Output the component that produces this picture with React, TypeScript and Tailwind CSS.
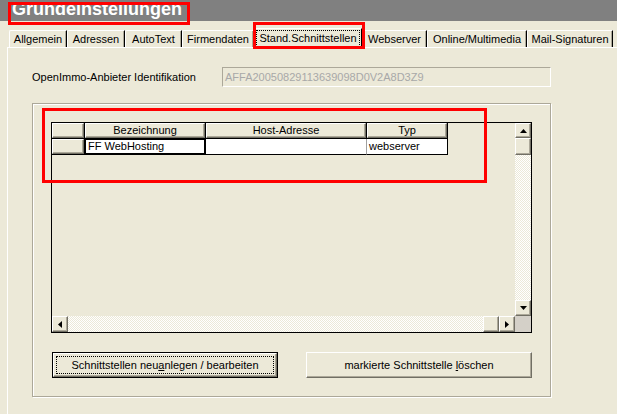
import React from "react"

const raised =
  "bg-[#ECE9D8] border border-t-white border-l-white border-r-[#716F64] border-b-[#716F64] shadow-[inset_-1px_-1px_0_#ACA899]"
const hatch =
  "bg-[image:repeating-conic-gradient(#ffffff_0_25%,#ECE9D8_0_50%)] [background-size:2px_2px]"

const tabs = [
  { label: "Allgemein", w: "w-[58px]" },
  { label: "Adressen", w: "w-[58px]" },
  { label: "AutoText", w: "w-[57px]" },
  { label: "Firmendaten", w: "w-[72px]" },
  { label: "Stand.Schnittstellen", w: "w-[108px]", active: true },
  { label: "Webserver", w: "w-[65px]" },
  { label: "Online/Multimedia", w: "w-[100px]" },
  { label: "Mail-Signaturen", w: "w-[86px]" },
]

function Arrow({ dir }: { dir: "up" | "down" | "left" | "right" }) {
  const pts = {
    up: "3.5,0 7,4 0,4",
    down: "0,0 7,0 3.5,4",
    left: "4,0 4,7 0,3.5",
    right: "0,0 4,3.5 0,7",
  }[dir]
  const horiz = dir === "up" || dir === "down"
  return (
    <svg width={horiz ? 7 : 4} height={horiz ? 4 : 7} viewBox={horiz ? "0 0 7 4" : "0 0 4 7"}>
      <polygon points={pts} fill="black" />
    </svg>
  )
}

function ScrollBtn({ dir, className = "" }: { dir?: "up" | "down" | "left" | "right"; className?: string }) {
  return (
    <div className={`${raised} flex items-center justify-center shrink-0 ${className}`}>
      {dir && <Arrow dir={dir} />}
    </div>
  )
}

export default function App() {
  return (
    <div className="w-[617px] h-[414px] bg-[#ECE9D8] overflow-hidden relative flex flex-col font-['Liberation_Sans',Arial,sans-serif] text-[11px] text-black">
      {/* title bar */}
      <div className="h-[21px] bg-[#808080] pl-[12px] text-white font-bold text-[18px] leading-[18px] shrink-0">
        Grundeinstellungen
      </div>
      <div className="absolute left-[8px] top-[2px] w-[182px] h-[23px] border-[3px] border-[#FF0000]" />

      {/* tab strip */}
      <div className="mt-[7px] h-[19px] pl-[9px] flex items-end shrink-0 relative z-10">
        {tabs.map((t) =>
          t.active ? (
            <div
              key={t.label}
              className={`${t.w} h-[20px] -mb-px bg-[#ECE9D8] border-t border-l border-white border-r border-r-black p-[1px] shrink-0`}
            >
              <div className="h-full border border-dotted border-black flex items-center justify-center leading-none">
                {t.label}
              </div>
            </div>
          ) : (
            <div
              key={t.label}
              className={`${t.w} h-[17px] border-t border-l border-white border-r border-r-black shadow-[inset_-1px_0_0_#ACA899] rounded-tl-[2px] flex items-center justify-center leading-none shrink-0`}
            >
              {t.label}
            </div>
          ),
        )}
      </div>
      <div className="absolute left-[253px] top-[22px] w-[112px] h-[27px] border-[3px] border-[#FF0000] z-20" />

      {/* pane */}
      <div className="flex-1 ml-[7px] border-t border-l border-white pl-[24px] pt-[19px]">
        <div className="flex items-center h-[20px]">
          <div className="w-[190px] shrink-0">OpenImmo-Anbieter Identifikation</div>
          <div className="w-[329px] h-[20px] border border-t-[#ACA899] border-l-[#ACA899] border-r-white border-b-white flex items-center pl-[2px] text-[#A8A8A8]">
            AFFA20050829113639098D0V2A8D3Z9
          </div>
        </div>

        {/* group box */}
        <div className="mt-[16px] w-[519px] h-[294px] border border-[#ACA899] shadow-[inset_1px_1px_0_white,1px_1px_0_white] px-[18px] pt-[18px]">
          {/* grid */}
          <div className="h-[211px] border border-black flex flex-col">
            <div className="flex flex-1 min-h-0">
              <div className="flex-1 flex flex-col">
                <div className="flex h-[16px]">
                  <div className="w-[33px] border-r border-b border-black">
                    <div className={`${raised} h-full`} />
                  </div>
                  <div className="w-[121px] border-r border-b border-black">
                    <div className={`${raised} h-full flex items-end justify-center leading-[13px]`}>Bezeichnung</div>
                  </div>
                  <div className="w-[161px] border-r border-b border-black">
                    <div className={`${raised} h-full flex items-end justify-center leading-[13px]`}>Host-Adresse</div>
                  </div>
                  <div className="w-[81px] border-r border-b border-black">
                    <div className={`${raised} h-full flex items-end justify-center leading-[13px]`}>Typ</div>
                  </div>
                </div>
                <div className="flex h-[16px]">
                  <div className="w-[33px] border-r border-b border-black">
                    <div className={`${raised} h-full`} />
                  </div>
                  <div className="w-[121px] border-r border-b border-black bg-white shadow-[inset_1px_1px_0_black,inset_-1px_-1px_0_black] pl-[3px] flex items-center leading-none">
                    FF WebHosting
                  </div>
                  <div className="w-[161px] border-r border-r-[#A0A0A0] border-b border-b-black bg-white" />
                  <div className="w-[81px] border-r border-b border-black bg-white pl-[2px] flex items-center leading-none">
                    webserver
                  </div>
                </div>
              </div>
              {/* vertical scrollbar */}
              <div className="w-[16px] flex flex-col">
                <ScrollBtn dir="up" className="h-[15px]" />
                <ScrollBtn className="h-[17px]" />
                <div className={`flex-1 ${hatch}`} />
                <ScrollBtn dir="down" className="h-[16px]" />
              </div>
            </div>
            {/* horizontal scrollbar */}
            <div className="h-[16px] flex shrink-0">
              <ScrollBtn dir="left" className="w-[16px]" />
              <div className={`flex-1 ${hatch}`} />
              <ScrollBtn className="w-[16px]" />
              <ScrollBtn dir="right" className="w-[16px]" />
              <div className="w-[16px] bg-[#D4D0C8]" />
            </div>
          </div>

          {/* buttons */}
          <div className="mt-[19px] flex gap-[28px] pl-[1px]">
            <div className="w-[226px] h-[26px] border border-black">
              <div className={`${raised} h-full p-[2px]`}>
                <div className="h-full border border-dotted border-black flex items-center justify-center">
                  <span>
                    Schnittstellen neu<u>a</u>nlegen / bearbeiten
                  </span>
                </div>
              </div>
            </div>
            <div className={`${raised} w-[226px] h-[26px] flex items-center justify-center`}>
              <span>
                markierte Schnittstelle <u>l</u>öschen
              </span>
            </div>
          </div>
        </div>
      </div>

      {/* annotation around grid */}
      <div className="absolute left-[42px] top-[108px] w-[445px] h-[75px] border-[3px] border-[#FF0000]" />
    </div>
  )
}
